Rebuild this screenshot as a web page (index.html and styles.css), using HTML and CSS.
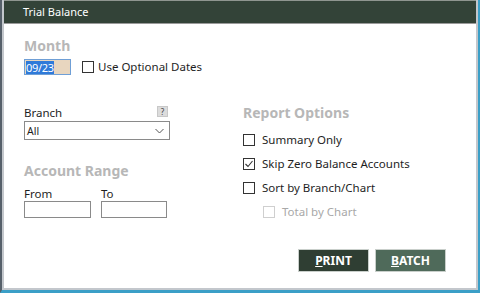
FILE: index.html
```html
<!DOCTYPE html>
<html lang="en">
<head>
    <meta charset="UTF-8">
    <title>Trial Balance</title>
    <link rel="stylesheet" href="styles.css">
</head>
<body>
    <div class="window">
        <div class="frame">
            <div class="title-bar">Trial Balance</div>

            <div class="content">
                <div class="month">
                    <div class="heading">Month</div>
                    <div class="month-row">
                        <div class="date-input"><span class="selected">09/23</span></div>
                        <label class="check">
                            <span class="box"></span>
                            <span>Use Optional Dates</span>
                        </label>
                    </div>
                </div>

                <div class="columns">
                    <div class="left">
                        <div class="branch-head">
                            <span class="label">Branch</span>
                            <span class="help">?</span>
                        </div>
                        <div class="select">
                            <span>All</span>
                            <svg width="9" height="6" viewBox="0 0 9 6"><path d="M0.5 1 L4.5 5 L8.5 1" fill="none" stroke="#555" stroke-width="1"/></svg>
                        </div>

                        <div class="heading range">Account Range</div>
                        <div class="range-row">
                            <div class="field">
                                <span class="label">From</span>
                                <div class="text-input from"></div>
                            </div>
                            <div class="field">
                                <span class="label">To</span>
                                <div class="text-input to"></div>
                            </div>
                        </div>
                    </div>

                    <div class="right">
                        <div class="heading">Report Options</div>
                        <div class="options">
                            <label class="check">
                                <span class="box"></span>
                                <span>Summary Only</span>
                            </label>
                            <label class="check">
                                <span class="box checked">
                                    <svg width="10" height="10" viewBox="0 0 10 10"><path d="M1.5 5 L4 7.5 L8.5 2" fill="none" stroke="#333" stroke-width="1.1"/></svg>
                                </span>
                                <span>Skip Zero Balance Accounts</span>
                            </label>
                            <label class="check">
                                <span class="box"></span>
                                <span>Sort by Branch/Chart</span>
                            </label>
                            <label class="check sub disabled">
                                <span class="box"></span>
                                <span>Total by Chart</span>
                            </label>
                        </div>
                    </div>
                </div>

                <div class="buttons">
                    <button class="btn print"><u>P</u>RINT</button>
                    <button class="btn batch"><u>B</u>ATCH</button>
                </div>
            </div>
        </div>
    </div>
</body>
</html>
```

FILE: styles.css
```css
/* base */
body {
    margin: 0;
    font-family: 'Noto Sans', sans-serif;
    font-size: 11px;
    color: #1e1e1e;
    background: #fff;
}

/* window frame */
.window {
    width: 480px;
    height: 293px;
    box-sizing: border-box;
    border-left: 2px solid #56606a;
    border-right: 2px solid #3b9fc7;
    border-bottom: 3px solid #3b9fc7;
}

.frame {
    height: 100%;
    box-sizing: border-box;
    border-left: 2px solid #c3c7cc;
    border-right: 2px solid #c3c7cc;
    border-bottom: 2px solid #c3c7cc;
    display: flex;
    flex-direction: column;
}

.title-bar {
    height: 24px;
    box-sizing: border-box;
    background: #334338;
    border-top: 1px solid #8f9690;
    border-bottom: 1px solid #9a9a9a;
    color: #fff;
    padding-left: 19px;
    line-height: 22px;
    font-size: 11px;
}

.content {
    flex: 1;
    padding: 13px 30px 0 20px;
    display: flex;
    flex-direction: column;
}

.heading {
    font-size: 14px;
    font-weight: bold;
    color: #b7b7b7;
    line-height: 18px;
}

/* month */
.month-row {
    display: flex;
    align-items: center;
    gap: 11px;
    margin-top: 4px;
}

.date-input {
    width: 47px;
    height: 16px;
    box-sizing: border-box;
    background: #e8d6bf;
    border: 1px solid #6f9fd6;
    display: flex;
    align-items: center;
    padding-left: 1px;
}

.selected {
    background: #2f7ad9;
    color: #fff;
    font-size: 11px;
    line-height: 13px;
    letter-spacing: -0.3px;
}

/* checkboxes */
.check {
    display: flex;
    align-items: center;
    gap: 4px;
    font-size: 11.5px;
    line-height: 16px;
}

.box {
    width: 12px;
    height: 12px;
    box-sizing: border-box;
    border: 1px solid #333;
    background: #fff;
    display: flex;
    align-items: center;
    justify-content: center;
}

.options .check {
    gap: 7px;
}

.check.disabled {
    color: #a8a8a8;
}

.check.disabled .box {
    border-color: #cfcfcf;
}

.check.sub {
    margin-left: 20px;
}

/* columns */
.columns {
    display: flex;
    margin-top: 30px;
}

.left {
    width: 146px;
}

.right {
    margin-left: 73px;
    margin-top: -1px;
}

.branch-head {
    display: flex;
    justify-content: space-between;
    align-items: flex-end;
    padding-right: 2px;
}

.label {
    font-size: 11.5px;
    line-height: 16px;
}

.help {
    width: 11px;
    height: 11px;
    box-sizing: border-box;
    background: #dcdcdc;
    border: 1px solid #c8c8c8;
    font-size: 8px;
    line-height: 9px;
    text-align: center;
    color: #444;
    margin-bottom: 4px;
}

.select {
    height: 19px;
    box-sizing: border-box;
    border: 1px solid #8a8a8a;
    display: flex;
    align-items: center;
    justify-content: space-between;
    padding: 0 5px 0 2px;
    font-size: 10.5px;
}

.range {
    margin-top: 22px;
}

.range-row {
    display: flex;
    gap: 10px;
    margin-top: 6px;
}

.field {
    display: flex;
    flex-direction: column;
}

.field .label {
    line-height: 15px;
}

.text-input {
    height: 17px;
    box-sizing: border-box;
    border: 1px solid #8a8a8a;
}

.text-input.from {
    width: 67px;
}

.text-input.to {
    width: 66px;
}

.options {
    display: flex;
    flex-direction: column;
    gap: 8px;
    margin-top: 10px;
}

/* buttons */
.buttons {
    display: flex;
    justify-content: flex-end;
    gap: 6px;
    margin-top: auto;
    margin-bottom: 16px;
}

.btn {
    width: 71px;
    height: 23px;
    border: 1px solid #c9cfcb;
    color: #fff;
    font-family: 'Noto Sans', sans-serif;
    font-weight: bold;
    font-size: 12px;
    padding: 0;
}

.btn.print {
    background: #2f3e33;
}

.btn.batch {
    background: #4f6a5a;
}
```
